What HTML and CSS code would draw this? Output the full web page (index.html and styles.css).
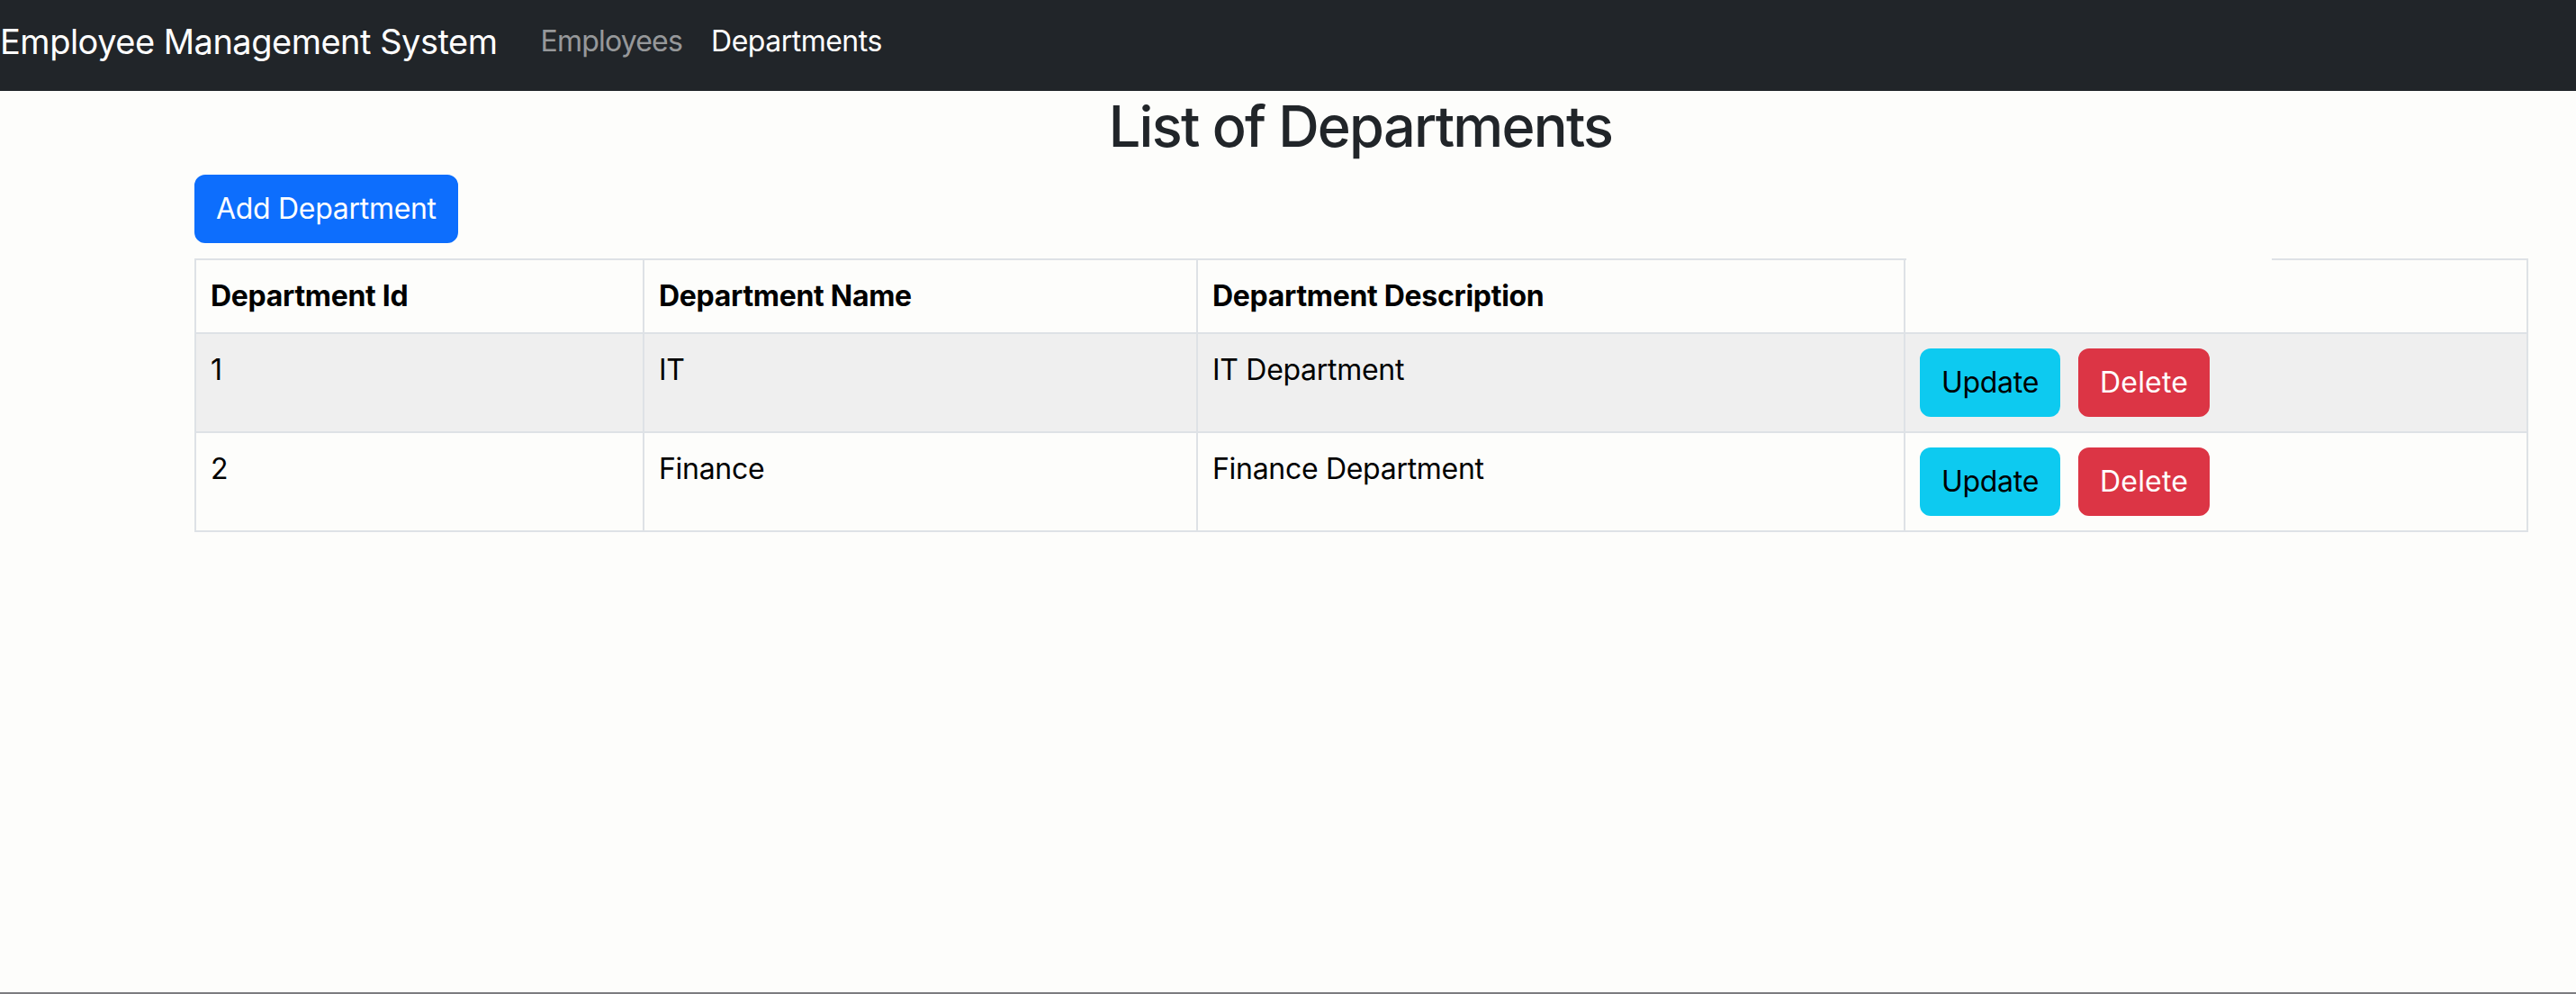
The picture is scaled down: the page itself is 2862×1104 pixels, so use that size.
FILE: index.html
```html
<!DOCTYPE html>
<html lang="en">
<head>
<meta charset="utf-8">
<title>Employee Management System</title>
<link rel="stylesheet" href="styles.css">
</head>
<body>
<header class="navbar">
  <a class="brand" href="#">Employee Management System</a>
  <nav class="nav">
    <a class="nav-link" href="#">Employees</a>
    <a class="nav-link active" href="#">Departments</a>
  </nav>
</header>
<main class="content">
  <h2 class="title">List of Departments</h2>
  <div class="toolbar">
    <button class="btn btn-primary">Add Department</button>
  </div>
  <table class="table">
    <colgroup>
      <col class="c1"><col class="c2"><col class="c3"><col class="c4">
    </colgroup>
    <thead>
      <tr>
        <th>Department Id</th>
        <th>Department Name</th>
        <th>Department Description</th>
        <th class="th-actions"></th>
      </tr>
    </thead>
    <tbody>
      <tr class="striped">
        <td>1</td>
        <td>IT</td>
        <td>IT Department</td>
        <td><div class="actions"><button class="btn btn-info">Update</button><button class="btn btn-danger">Delete</button></div></td>
      </tr>
      <tr>
        <td>2</td>
        <td>Finance</td>
        <td>Finance Department</td>
        <td><div class="actions"><button class="btn btn-info">Update</button><button class="btn btn-danger">Delete</button></div></td>
      </tr>
    </tbody>
  </table>
</main>
</body>
</html>
```

FILE: styles.css
```css
* { box-sizing: border-box; }

html, body {
  margin: 0;
  padding: 0;
}

body {
  min-height: 100vh;
  background: #fdfdfb;
  font-family: Inter, "Liberation Sans", Arial, sans-serif;
  font-size: 32px;
  line-height: 48px;
  color: #212529;
  border-bottom: 2px solid #7c7c80;
}

.navbar {
  height: 101px;
  background: #212529;
  display: flex;
  align-items: center;
  padding-bottom: 10px;
}

.brand {
  font-size: 38px;
  line-height: 60px;
  color: #fff;
  text-decoration: none;
  margin-right: 32px;
  white-space: nowrap;
  letter-spacing: -0.5px;
}

.nav {
  display: flex;
}

.nav-link {
  font-size: 32px;
  line-height: 48px;
  padding: 0 16px;
  color: rgba(255, 255, 255, 0.55);
  text-decoration: none;
  letter-spacing: -0.8px;
}

.nav-link.active {
  color: #fff;
  letter-spacing: -0.5px;
}

.content {
  padding: 0 55px 0 216px;
}

.title {
  margin: 1px 0 15px;
  text-align: center;
  font-size: 63px;
  line-height: 77px;
  font-weight: 500;
  color: #212529;
  letter-spacing: -1.75px;
}

.toolbar {
  display: flex;
  margin-bottom: 17px;
}

.btn {
  font-family: inherit;
  font-size: 32px;
  line-height: 48px;
  padding: 12px 22px;
  border: 2px solid transparent;
  border-radius: 12px;
  cursor: pointer;
  letter-spacing: -0.3px;
}

.btn-primary {
  background: #0d6efd;
  border-color: #0d6efd;
  color: #fff;
}

.btn-info {
  background: #0dcaf0;
  border-color: #0dcaf0;
  color: #000;
}

.btn-danger {
  background: #dc3545;
  border-color: #dc3545;
  color: #fff;
  letter-spacing: 0.2px;
}

.table {
  width: 2591px;
  table-layout: fixed;
  border-collapse: collapse;
  color: #000;
}

.c1 { width: 498px; }
.c2 { width: 615px; }
.c3 { width: 786px; }
.c4 { width: 692px; }

.table th,
.table td {
  border: 2px solid #dee2e6;
  padding: 16px;
  text-align: left;
  vertical-align: top;
  font-size: 32px;
  line-height: 48px;
  letter-spacing: -0.3px;
}

.table th {
  font-weight: 700;
}

.th-actions {
  position: relative;
}

.th-actions::after {
  content: "";
  position: absolute;
  left: 1px;
  top: -2px;
  width: 406px;
  height: 2px;
  background: #fdfdfb;
}

.striped td {
  background: #efefef;
}

.actions {
  display: flex;
  gap: 20px;
}
```
